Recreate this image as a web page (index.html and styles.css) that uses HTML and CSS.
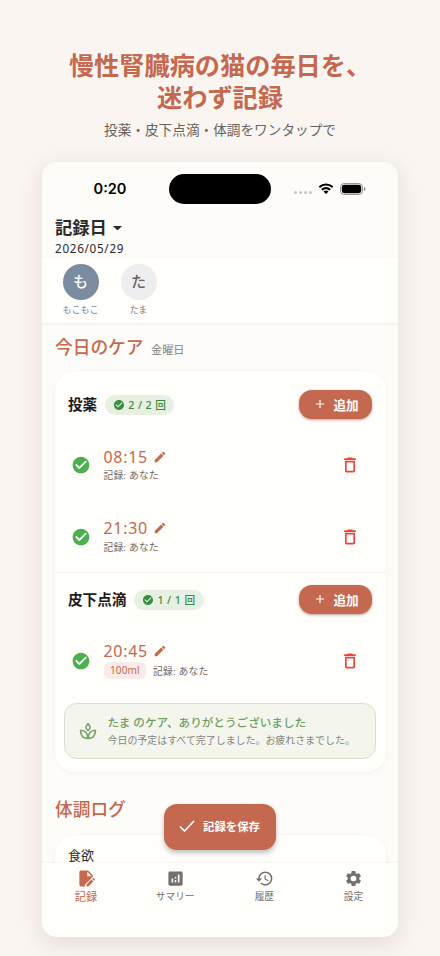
FILE: index.html
```html
<!DOCTYPE html>
<html lang="ja">
<head>
<meta charset="utf-8">
<title>今日のケア</title>
<link rel="stylesheet" href="styles.css">
</head>
<body>
<svg class="defs" width="0" height="0">
  <symbol id="check-circle" viewBox="0 0 24 24"><path d="M12 2C6.48 2 2 6.48 2 12s4.48 10 10 10 10-4.48 10-10S17.52 2 12 2zm-2 15l-5-5 1.41-1.41L10 14.17l7.59-7.59L19 8l-9 9z"/></symbol>
  <symbol id="pencil" viewBox="0 0 24 24"><path d="M3 17.25V21h3.75L17.81 9.94l-3.75-3.75L3 17.25zM20.71 7.04a1 1 0 0 0 0-1.41l-2.34-2.34a1 1 0 0 0-1.41 0l-1.83 1.83 3.75 3.75 1.83-1.83z"/></symbol>
  <symbol id="trash" viewBox="0 0 24 24"><path d="M6 19c0 1.1.9 2 2 2h8c1.1 0 2-.9 2-2V7H6v12zM8 9h8v10H8V9zm7.5-5l-1-1h-5l-1 1H5v2h14V4z"/></symbol>
  <symbol id="plus" viewBox="0 0 24 24"><path d="M19 13h-6v6h-2v-6H5v-2h6V5h2v6h6z"/></symbol>
</svg>
<header class="hero">
  <h1>慢性腎臓病の猫の毎日を、<br>迷わず記録</h1>
  <p>投薬・皮下点滴・体調をワンタップで</p>
</header>
<main class="phone">
  <div class="status">
    <span class="clock">0:20</span>
    <span class="island"></span>
    <span class="signals">
      <span class="dots"><i></i><i></i><i></i><i></i></span>
      <svg class="wifi" viewBox="0 0 17 12"><path d="M8.5 2.4c2.3 0 4.4.9 6 2.4.1.1.3.1.4 0l1.2-1.2a.3.3 0 0 0 0-.4A11 11 0 0 0 .9 3.2a.3.3 0 0 0 0 .4l1.2 1.2c.1.1.3.1.4 0a8.7 8.7 0 0 1 6-2.4zM8.5 6.2c1.3 0 2.5.5 3.4 1.3.1.1.3.1.4 0l1.2-1.2a.3.3 0 0 0 0-.4 7.3 7.3 0 0 0-10 0 .3.3 0 0 0 0 .4l1.2 1.2c.1.1.3.1.4 0 .9-.8 2.1-1.3 3.4-1.3zM10.9 8.9a.3.3 0 0 0 0-.4 3.7 3.7 0 0 0-4.8 0 .3.3 0 0 0 0 .4l2.1 2.1c.2.2.4.2.6 0z"/></svg>
      <svg class="battery" viewBox="0 0 26 12"><rect x=".5" y=".5" width="22" height="11" rx="3.6" fill="none" stroke="#000" stroke-opacity=".4"/><rect x="1.8" y="1.8" width="19.4" height="8.4" rx="2.4"/><path d="M24 4v4c.8-.3 1.3-1.1 1.3-2S24.8 4.3 24 4z" opacity=".5"/></svg>
    </span>
  </div>
  <div class="date-head">
    <div class="date-label">記録日<svg viewBox="0 0 10 5"><path d="M0 0h10L5 5z"/></svg></div>
    <div class="date">2026/05/29</div>
  </div>
  <div class="pets">
    <div class="pet active"><span class="avatar">も</span><span class="name">もこもこ</span></div>
    <div class="pet"><span class="avatar">た</span><span class="name">たま</span></div>
  </div>
  <div class="content">
    <div class="section-title"><h2>今日のケア</h2><span>金曜日</span></div>
    <section class="card">
      <div class="group-head">
        <h3>投薬</h3>
        <span class="badge"><svg><use href="#check-circle"/></svg>2 / 2 回</span>
        <button class="add"><svg><use href="#plus"/></svg>追加</button>
      </div>
      <div class="entry">
        <svg class="done"><use href="#check-circle"/></svg>
        <div class="info"><div class="time">08:15<svg><use href="#pencil"/></svg></div><div class="meta">記録: あなた</div></div>
        <svg class="trash"><use href="#trash"/></svg>
      </div>
      <div class="entry">
        <svg class="done"><use href="#check-circle"/></svg>
        <div class="info"><div class="time">21:30<svg><use href="#pencil"/></svg></div><div class="meta">記録: あなた</div></div>
        <svg class="trash"><use href="#trash"/></svg>
      </div>
      <div class="group-head second">
        <h3>皮下点滴</h3>
        <span class="badge"><svg><use href="#check-circle"/></svg>1 / 1 回</span>
        <button class="add"><svg><use href="#plus"/></svg>追加</button>
      </div>
      <div class="entry drip">
        <svg class="done"><use href="#check-circle"/></svg>
        <div class="info"><div class="time">20:45<svg><use href="#pencil"/></svg></div><div class="meta"><span class="chip">100ml</span>記録: あなた</div></div>
        <svg class="trash"><use href="#trash"/></svg>
      </div>
      <div class="notice">
        <svg viewBox="0 0 24 24"><g fill="none" stroke="currentColor" stroke-width="1.9" stroke-linejoin="round"><path d="M12 3.2C10.2 5 9.5 6.300 9.500 7.800c0 1.300 1 2.500 2.500 3.800 1.500-1.300 2.500-2.500 2.500-3.800C14.500 6.300 13.800 5 12 3.200z"/><path d="M12 21C6.500 20.800 3 17.400 3 11c4.900.3 8.800 3.400 9 10z"/><path d="M12 21c5.500-.2 9-3.600 9-10-4.900.3-8.800 3.400-9 10z"/></g></svg>
        <div><strong>たま のケア、ありがとうございました</strong><p>今日の予定はすべて完了しました。お疲れさまでした。</p></div>
      </div>
    </section>
    <h2 class="log-title">体調ログ</h2>
    <section class="card log"><span>食欲</span></section>
  </div>
  <button class="save"><svg viewBox="0 0 16 14"><path d="M1 7.5L5.5 12 15 2" fill="none" stroke="#fff" stroke-width="1.6"/></svg>記録を保存</button>
  <nav>
    <a class="current"><svg viewBox="0 0 24 24"><path d="M5 2h9l6 6v1.800L10 19.800V22H5a2 2 0 0 1-2-2V4c0-1.100.9-2 2-2zm8 1.500V9h5.500z"/><path d="M12 22v-2.300l6.300-6.300 2.300 2.300-6.300 6.300zM19.200 12.500l.9-.9c.4-.4.9-.4 1.300 0l1 1c.4.4.4.9 0 1.300l-.9.9z"/></svg>記録</a>
    <a><svg viewBox="0 0 24 24"><path d="M19 3H5c-1.100 0-2 .9-2 2v14c0 1.100.9 2 2 2h14c1.100 0 2-.9 2-2V5c0-1.100-.9-2-2-2zM9 17H7v-5h2v5zm4 0h-2v-3h2v3zm0-5h-2v-2h2v2zm4 5h-2V7h2v10z"/></svg>サマリー</a>
    <a><svg viewBox="0 0 24 24"><path d="M13 3a9 9 0 0 0-9 9H1l3.890 3.890.07.14L9 12H6c0-3.870 3.130-7 7-7s7 3.130 7 7-3.130 7-7 7c-1.930 0-3.680-.79-4.940-2.060l-1.420 1.420A8.950 8.950 0 0 0 13 21a9 9 0 0 0 0-18zm-1 5v5l4.280 2.540.72-1.210-3.500-2.080V8z"/></svg>履歴</a>
    <a><svg viewBox="0 0 24 24"><path fill-rule="evenodd" d="M19.140 12.940c.04-.3.06-.61.06-.94s-.02-.64-.07-.94l2.030-1.580a.49.49 0 0 0 .12-.61l-1.920-3.320a.49.49 0 0 0-.59-.22l-2.390.96c-.5-.38-1.030-.7-1.620-.94l-.36-2.540A.48.48 0 0 0 13.920 2.400h-3.840c-.24 0-.43.17-.47.41l-.36 2.540c-.59.24-1.130.57-1.620.94l-2.390-.96a.48.48 0 0 0-.59.22L2.740 8.870c-.12.21-.08.47.12.61l2.030 1.580c-.05.3-.09.63-.09.94s.02.64.07.94l-2.030 1.580a.49.49 0 0 0-.12.61l1.920 3.320c.12.22.37.29.59.22l2.390-.96c.5.38 1.030.7 1.620.94l.36 2.540c.05.24.24.41.48.41h3.840c.24 0 .44-.17.47-.41l.36-2.540c.59-.24 1.130-.56 1.620-.94l2.390.96c.22.08.47 0 .59-.22l1.920-3.320a.48.48 0 0 0-.12-.61zM12 15.600a3.600 3.600 0 1 1 0-7.200 3.600 3.600 0 0 1 0 7.200z"/></svg>設定</a>
  </nav>
</main>
</body>
</html>
```
FILE: styles.css
```css
* { box-sizing: border-box; }
body {
  margin: 0;
  height: 956px;
  overflow: hidden;
  background: #faf5f1;
  font-family: "Noto Sans", "Noto Sans CJK JP", sans-serif;
  color: #2c2a29;
}
h1, h2, h3, p { margin: 0; }
svg { display: block; flex: none; fill: currentColor; }
button { border: 0; padding: 0; font-family: inherit; color: #fff; background: #c4694f; display: flex; align-items: center; }
.defs { position: absolute; }

.hero { height: 162px; padding: 48.5px 0 0; text-align: center; white-space: nowrap; }
.hero h1 { font-size: 25.2px; line-height: 32.5px; font-weight: 700; color: #c4694f; }
.hero p { margin-top: 6.5px; font-size: 13.65px; line-height: 20px; color: #666361; }

.phone {
  position: relative;
  width: 356.5px;
  height: 775px;
  margin: 0 0 0 41.5px;
  border-radius: 15px;
  overflow: hidden;
  background: #fdfcf9;
  box-shadow: 0 6px 24px rgba(80, 45, 30, .13);
  display: flex;
  flex-direction: column;
}

.status { flex: none; height: 52px; padding: 11.5px 32px 0 52px; display: grid; grid-template-columns: 75.5px 102px 1fr; align-items: start; }
.clock { font: 600 14.6px/30px Inter, sans-serif; color: #000; }
.island { height: 30px; border-radius: 15px; background: #000; }
.signals { height: 30px; display: flex; align-items: center; justify-content: flex-end; color: #000; }
.dots { display: flex; gap: 2px; margin: 8px 6px 0 0; }
.dots i { width: 3px; height: 3px; border-radius: 50%; background: #c6c5c2; }
.wifi { width: 16px; height: 12px; margin-right: 6px; }
.battery { width: 26px; height: 12px; }

.date-head { flex: none; height: 44px; padding-left: 13.5px; }
.date-label { display: flex; align-items: center; font-size: 17.3px; line-height: 26px; padding-top: 1px; font-weight: 700; }
.date-label svg { width: 9px; height: 4.5px; margin-left: 6px; }
.date { font-size: 11.7px; line-height: 16px; letter-spacing: .7px; margin-top: -1px; }

.pets { flex: none; height: 65px; padding: 6px 0 0 10px; display: flex; background: #fffefb; box-shadow: 0 1px 3px rgba(0, 0, 0, .08); z-index: 1; }
.pet { width: 58px; display: flex; flex-direction: column; align-items: center; font-size: 9px; color: #85827f; }
.avatar { width: 36px; height: 36px; border-radius: 50%; background: #eeeeef; color: #686666; font-size: 15px; line-height: 35px; font-weight: 500; text-align: center; }
.name { line-height: 14px; margin-top: 3px; }
.active { color: #7b8ca0; }
.active .avatar { background: #7b8ca0; color: #fff; }

.content { flex: 1; min-height: 0; overflow: hidden; padding: 0 12.5px 0 13.5px; }
.section-title { height: 48px; padding-top: 11px; display: flex; align-items: baseline; gap: 7.5px; }
h2 { font-size: 17.7px; line-height: 26px; font-weight: 500; color: #c4694f; }
.section-title span { font-size: 11.2px; color: #858380; }

.card { height: 401px; border-radius: 20px; background: #fffefb; box-shadow: 0 1px 5px rgba(90, 60, 40, .05); }
.group-head { height: 58px; padding: 9px 13.5px 0 13px; display: flex; align-items: center; }
h3 { font-size: 14.6px; line-height: 22px; margin-top: -1px; font-weight: 700; color: #1d1b20; }
.badge { height: 20px; margin-left: 8px; padding: 0 8px 1px; display: flex; align-items: center; border-radius: 10px; background: #e7f0e3; color: #388e3c; font-size: 10.7px; font-weight: 500; letter-spacing: .4px; white-space: nowrap; }
.badge svg { width: 12px; height: 12px; margin: 1px 3px 0 0; }
.add { width: 73.5px; height: 29.5px; margin-left: auto; padding: 0 0 1px 14px; border-radius: 13px; font-size: 12.6px; font-weight: 700; box-shadow: 0 1px 3px rgba(80, 30, 10, .4); }
.add svg { width: 14px; height: 14px; margin-right: 7px; }
.entry { height: 71.5px; padding: 0 26px 0 15.5px; display: flex; align-items: center; }
.done { width: 20px; height: 20px; margin-top: 1px; color: #4caf50; }
.info { margin-left: 13px; }
.time { display: flex; align-items: center; height: 21px; font-size: 16px; letter-spacing: .7px; color: #c4694f; }
.time svg { width: 14px; height: 14px; margin-left: 5px; }
.meta { height: 16px; display: flex; align-items: center; font-size: 9.7px; letter-spacing: .25px; color: #706663; }
.trash { width: 20px; height: 20px; margin: 1px 0 0 auto; color: #ee443a; }
.second { height: 54px; padding-top: 0; border-top: 1.5px solid #f3f1ef; }
.drip { height: 68px; }
.drip .meta { height: 18px; }
.chip { height: 17.5px; padding: 0 6.5px; margin-right: 7px; border-radius: 6px; background: #f9ece8; color: #c4694f; font-size: 10px; line-height: 17px; letter-spacing: .1px; }
.notice { height: 56px; margin: 8.5px 10px 0 9px; padding-left: 13px; display: flex; align-items: center; border: 1px solid #d6e2ce; border-radius: 13px; background: #f4f6ee; white-space: nowrap; }
.notice svg { width: 20px; height: 20px; color: #75a269; }
.notice div { margin-left: 9.5px; }
.notice strong { display: block; font-size: 11.6px; line-height: 18px; font-weight: 500; color: #6da062; }
.notice p { font-size: 9.95px; line-height: 16px; color: #858582; }

.log-title { margin: 24px 0 13px; }
.log { height: 80px; padding: 9.5px 13px; font-size: 13px; line-height: 20px; }

.save { position: absolute; left: 122.5px; top: 642px; width: 112px; height: 45.5px; padding: 0 0 1px 14.5px; border-radius: 13px; font-size: 11.4px; font-weight: 700; white-space: nowrap; box-shadow: 0 3px 5px rgba(0, 0, 0, .25); z-index: 2; }
.save svg { width: 16px; height: 14px; margin-right: 8.5px; }

nav { flex: none; height: 74.5px; display: grid; grid-template-columns: repeat(4, 1fr); background: #fffefb; box-shadow: 0 -1px 2px rgba(0, 0, 0, .035); z-index: 1; }
nav a { padding-top: 6px; display: flex; flex-direction: column; align-items: center; font-size: 9.7px; line-height: 18px; color: #73706e; }
nav svg { width: 19px; height: 19px; }
nav .current { color: #c4694f; font-size: 11.2px; }
```
